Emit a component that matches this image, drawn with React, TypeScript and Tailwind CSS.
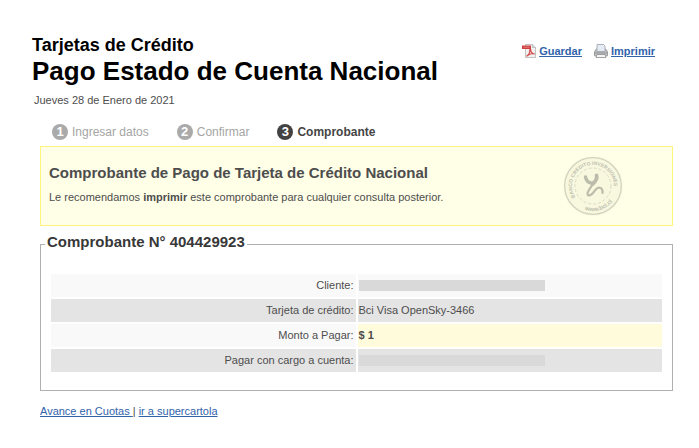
import React from "react";

function PdfIcon() {
  return (
    <svg width="14" height="14" viewBox="0 0 14 14" aria-hidden="true">
      <path d="M3.500 .5h7l3 3v10h-10z" fill="#f1f1f1" stroke="#b4b4b4" strokeWidth=".8" />
      <path d="M10.500 .5v3h3" fill="#ddd" stroke="#b4b4b4" strokeWidth=".8" />
      <path d="M0 1.500h9v3.500H0z" fill="#d04040" />
      <path d="M1.500 3.200h6" stroke="#e58a84" strokeWidth=".8" />
      <path d="M4.500 12.200c2-1 3.500-4 3.300-6.400 0-.9 1-.8.900 0-.2 2.200 1.600 4.300 4 4.200-2-1-5.500.1-8.200 2.200z" fill="none" stroke="#d24a48" strokeWidth="1.200" />
    </svg>
  );
}

function PrinterIcon() {
  return (
    <svg width="14" height="14" viewBox="0 0 14 14" aria-hidden="true">
      <path d="M1.500 6L3 4.500h8L12.500 6l1 2v3.500q0 .5-.5.5H1q-.5 0-.5-.5V8z" fill="#c2c4c7" stroke="#8b8b8b" strokeWidth=".8" />
      <path d="M3 7.500V.5h6.500L11 2v5.500z" fill="#e6ecf6" stroke="#9aa0aa" strokeWidth=".8" />
      <path d="M1 9h12" stroke="#909090" strokeWidth="1" />
      <path d="M3 10.500h8l1 3H2z" fill="#f4f4f4" stroke="#8f8f8f" strokeWidth=".8" />
    </svg>
  );
}

function Stamp() {
  return (
    <svg width="62" height="62" viewBox="0 0 62 62" role="img" aria-label="Banco Crédito Inversiones" className="shrink-0">
      <defs>
        <path id="stamp-top" d="M13.200 42.100A21 21 0 1 1 50.500 38.700" />
        <path id="stamp-bottom" d="M14.900 50.200A25 25 0 0 0 54.800 38.700" />
      </defs>
      <circle cx="31" cy="31" r="30" fill="#fbfbe2" />
      <circle cx="31" cy="31" r="28.300" fill="#f8f8df" stroke="#d2d2bf" strokeWidth="1.300" />
      <circle cx="31" cy="31" r="18" fill="none" stroke="#d2d2bf" strokeWidth=".8" strokeDasharray="3 2" />
      <g fill="#c0c0af" fontFamily="Liberation Sans, Arial, sans-serif" fontWeight="700">
        <text fontSize="5">
          <textPath href="#stamp-top">BANCO CREDITO INVERSIONES</textPath>
        </text>
        <text fontSize="6" textAnchor="middle">
          <textPath href="#stamp-bottom" startOffset="50%">www.bci.cl</textPath>
        </text>
      </g>
      <g fill="none" stroke="#bcbcab" strokeLinecap="round" strokeLinejoin="round">
        <path d="M23.500 22C24 25.500 27 28 31 28.500" strokeWidth="3.400" />
        <path d="M34.500 20.500C35.500 24 33 27 30.500 29" strokeWidth="3.800" />
        <path d="M31.500 28C30 31 26 35 25.500 38.500C25.500 41.500 29 40.500 31 38C33 35.500 34 33 37 32.500C39.500 32.500 41 35 40.500 38" strokeWidth="2.200" />
      </g>
    </svg>
  );
}

function Step({ n, label, active = false }: { n: number; label: string; active?: boolean }) {
  return (
    <li
      aria-current={active ? "step" : undefined}
      className={`flex items-center gap-1 text-xs leading-4 ${active ? "font-bold text-[#454545]" : "text-[#a5a5a5]"}`}
    >
      <span
        className={`flex size-4 items-center justify-center rounded-full text-[13px] font-bold text-white ${active ? "bg-[#424242]" : "bg-[#aaaaaa]"}`}
      >
        {n}
      </span>
      {label}
    </li>
  );
}

const link = "text-[#3163ab] underline";

const rows = [
  { label: "Cliente:", value: null, head: "bg-[#f9f9f9]", cell: "bg-[#f9f9f9]" },
  { label: "Tarjeta de crédito:", value: "Bci Visa OpenSky-3466", head: "bg-[#e4e4e4]", cell: "bg-[#e4e4e4]" },
  { label: "Monto a Pagar:", value: "$ 1", head: "bg-[#f9f9f9]", cell: "bg-[#fffbdb] font-bold" },
  { label: "Pagar con cargo a cuenta:", value: null, head: "bg-[#e4e4e4]", cell: "bg-[#e4e4e4]" },
];

export default function App() {
  return (
    <main className="bg-white pt-[35px] pr-[26px] pb-7 pl-8 font-['Liberation_Sans',Arial,sans-serif] text-[11px] text-[#4d4d4d]">
      <header className="flex items-start justify-between">
        <h1 className="font-bold text-black">
          <span className="block text-[18px] leading-5">Tarjetas de Crédito</span>
          <span className="block text-[26px] leading-8">Pago Estado de Cuenta Nacional</span>
        </h1>
        <nav className="flex gap-3 pt-2 pr-[18px] leading-4 font-bold">
          <a href="#guardar" className={`flex items-center gap-[3px] ${link}`}>
            <PdfIcon />
            Guardar
          </a>
          <a href="#imprimir" className={`flex items-center gap-[3px] ${link}`}>
            <PrinterIcon />
            Imprimir
          </a>
        </nav>
      </header>

      <p className="mt-[5px] pl-[2px] leading-4">Jueves 28 de Enero de 2021</p>

      <ol className="mt-4 flex gap-7 pl-5">
        <Step n={1} label="Ingresar datos" />
        <Step n={2} label="Confirmar" />
        <Step n={3} label="Comprobante" active />
      </ol>

      <div className="pl-2">
        <section className="mt-[6px] flex items-start justify-between border border-[#fff47c] bg-[#fffee7] pt-2 pr-12 pb-2 pl-2">
          <div className="pt-2">
            <h2 className="text-[15px] leading-5 font-bold">Comprobante de Pago de Tarjeta de Crédito Nacional</h2>
            <p className="mt-1 leading-5">
              Le recomendamos <strong>imprimir</strong> este comprobante para cualquier consulta posterior.
            </p>
          </div>
          <Stamp />
        </section>

        <fieldset className="mt-[6px] border border-[#b0b0b0] px-2 pb-4">
          <legend className="-ml-1 px-[2px] pb-1 text-[15px] leading-5 font-bold text-[#383838]">
            Comprobante N° 404429923
          </legend>
          <table className="mt-4 w-full table-fixed border-separate border-spacing-x-[2px] border-spacing-y-[2px]">
            <tbody>
              {rows.map((r) => (
                <tr key={r.label} className="h-[23px]">
                  <th scope="row" className={`px-[2px] text-right font-normal ${r.head}`}>
                    {r.label}
                  </th>
                  <td className={`pr-[2px] pl-px ${r.cell}`}>
                    {r.value ?? <div className="h-[11px] w-[186px] bg-[#d9d9d9]" />}
                  </td>
                </tr>
              ))}
            </tbody>
          </table>
        </fieldset>

        <p className="mt-3 leading-4">
          <a href="#avance" className={link}>Avance en Cuotas&nbsp;</a>|{" "}
          <a href="#supercartola" className={link}>ir a supercartola</a>
        </p>
      </div>
    </main>
  );
}
